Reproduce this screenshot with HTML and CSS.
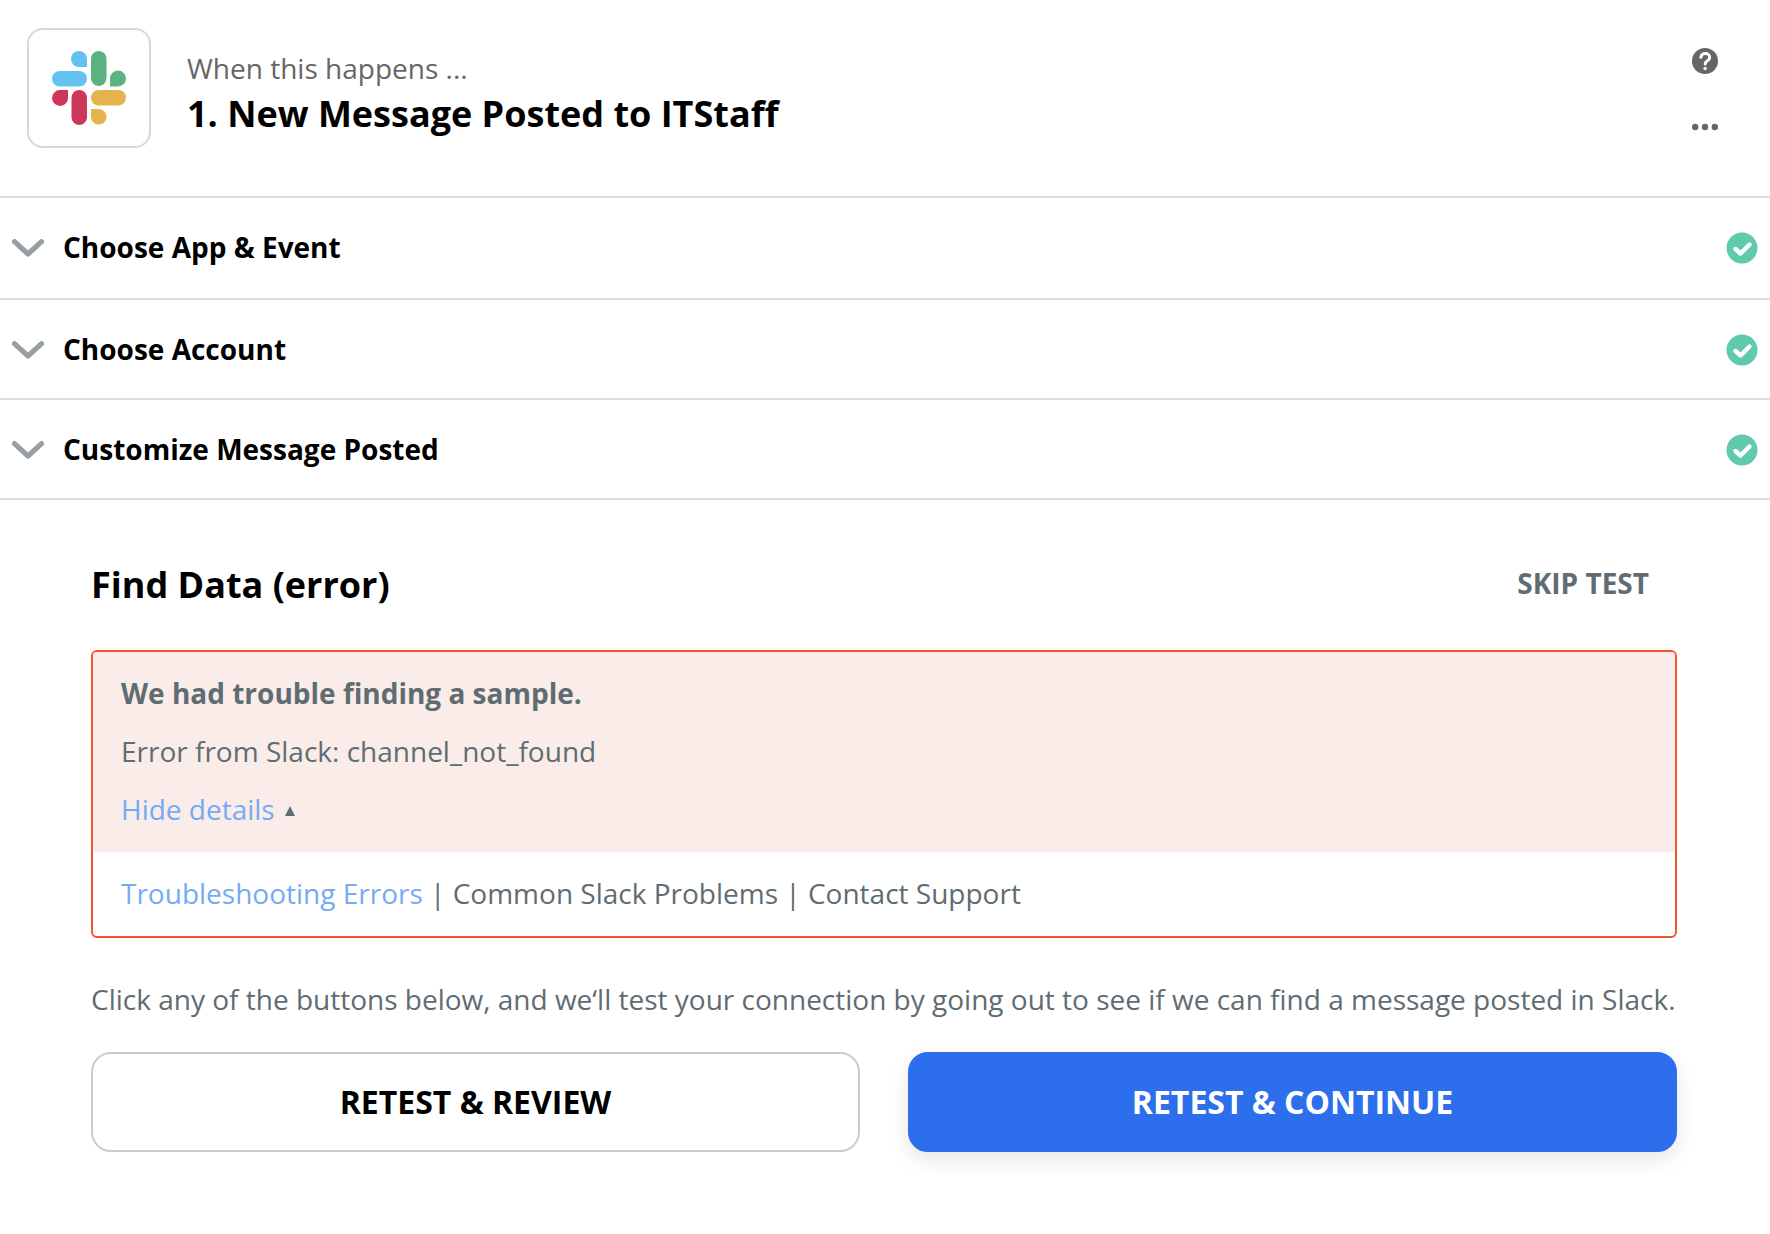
FILE: index.html
```html
<!DOCTYPE html>
<html lang="en">
<head>
<meta charset="utf-8">
<meta name="viewport" content="width=device-width, initial-scale=1">
<title>New Message Posted to ITStaff</title>
<link rel="stylesheet" href="styles.css">
</head>
<body>
<svg class="sprite" aria-hidden="true">
  <symbol id="chevron" viewBox="0 0 32 18"><path d="M2.500 2.700 16 15 29.500 2.700" fill="none" stroke="currentColor" stroke-width="5.200" stroke-linecap="round" stroke-linejoin="round"/></symbol>
  <symbol id="check" viewBox="0 0 32 32"><circle cx="16" cy="16" r="15.500" fill="currentColor"/><path d="M9.500 17 14.500 21.500 23.500 12.500" fill="none" stroke="#fff" stroke-width="4.400" stroke-linecap="round" stroke-linejoin="round"/></symbol>
</svg>
<main>
  <header class="step-header">
    <div class="app-tile">
      <svg class="app-logo" viewBox="0 0 74 74" role="img" aria-label="Slack">
        <g fill="#63c3ee"><path d="M35 16V8a8 8 0 1 0-8 8z"/><rect y="20" width="35" height="15.500" rx="7.750"/></g>
        <g fill="#5cb382"><rect x="39" width="15.500" height="35" rx="7.750"/><path d="M58 35.500V28a8 8 0 1 1 8 7.500z"/></g>
        <g fill="#cd375c"><path d="M16 39v7.500A8 8 0 1 1 8 39z"/><rect x="19.500" y="39" width="15.500" height="35" rx="7.750"/></g>
        <g fill="#e4b34c"><rect x="39" y="39" width="35" height="15.500" rx="7.750"/><path d="M39 58v8a7.800 7.800 0 1 0 8-8z"/></g>
      </svg>
    </div>
    <div class="step-text">
      <p class="step-kicker">When this happens ...</p>
      <h1 class="heading">1. New Message Posted to ITStaff</h1>
    </div>
    <div class="step-actions">
      <button class="icon-button" type="button" aria-label="Help">
        <svg viewBox="0 0 26 26"><circle cx="13" cy="13" r="13" fill="currentColor"/><path d="M8.900 9.300C9.400 6.700 11.200 5.600 13.300 5.600 15.900 5.600 17.700 7.200 17.700 9.400 17.700 12.700 13.200 12.600 13.200 16" fill="none" stroke="#fff" stroke-width="3" stroke-linecap="round"/><circle cx="13.100" cy="20.500" r="1.700" fill="#fff"/></svg>
      </button>
      <button class="icon-button" type="button" aria-label="More options">
        <svg viewBox="0 0 26 26" fill="currentColor"><circle cx="3.200" cy="13" r="3.200"/><circle cx="13" cy="13" r="3.200"/><circle cx="22.800" cy="13" r="3.200"/></svg>
      </button>
    </div>
  </header>

  <button class="section-row section-row-first" type="button">
    <svg class="chevron"><use href="#chevron"/></svg>
    <span class="section-title">Choose App &amp; Event</span>
    <svg class="check"><use href="#check"/></svg>
  </button>
  <button class="section-row" type="button">
    <svg class="chevron"><use href="#chevron"/></svg>
    <span class="section-title">Choose Account</span>
    <svg class="check"><use href="#check"/></svg>
  </button>
  <button class="section-row" type="button">
    <svg class="chevron"><use href="#chevron"/></svg>
    <span class="section-title">Customize Message Posted</span>
    <svg class="check"><use href="#check"/></svg>
  </button>

  <section class="test-panel">
    <div class="test-head">
      <h2 class="heading">Find Data (error)</h2>
      <button class="skip-button" type="button">SKIP TEST</button>
    </div>
    <div class="alert" role="alert">
      <div class="alert-message">
        <p><strong>We had trouble finding a sample.</strong></p>
        <p>Error from Slack: channel_not_found</p>
        <p class="details"><a class="link" href="#details">Hide details</a><svg class="caret" viewBox="0 0 10 10"><path d="M5 0 10 10H0z" fill="currentColor"/></svg></p>
      </div>
      <p class="alert-links" id="details"><a class="link" href="#errors">Troubleshooting Errors</a> | <a class="plain-link" href="#problems">Common Slack Problems</a> | <a class="plain-link" href="#support">Contact Support</a></p>
    </div>
    <p class="hint">Click any of the buttons below, and we‘ll test your connection by going out to see if we can find a message posted in Slack.</p>
    <div class="button-row">
      <button class="button button-outline" type="button">RETEST &amp; REVIEW</button>
      <button class="button button-primary" type="button">RETEST &amp; CONTINUE</button>
    </div>
  </section>
</main>
</body>
</html>
```
FILE: styles.css
```css
* {
  box-sizing: border-box;
}

body {
  margin: 0;
  background: #fff;
  color: #5f6c72;
  font: 28px/42px "Open Sans", "Noto Sans", sans-serif;
}

h1, h2, p {
  margin: 0;
}

button {
  margin: 0;
  border: 0;
  background: none;
  color: inherit;
  font: inherit;
  cursor: pointer;
}

.sprite {
  display: none;
}

.heading {
  color: #000;
  font-size: 36px;
  line-height: 48px;
  font-weight: 700;
}

.step-header {
  display: flex;
  align-items: flex-start;
  gap: 36px;
  padding: 28px 52px 48px 27px;
  border-bottom: 2px solid #dadfe3;
}

.app-tile {
  display: flex;
  align-items: center;
  justify-content: center;
  flex: none;
  width: 124px;
  height: 120px;
  border: 2px solid #d8d8d8;
  border-radius: 16px;
}

.app-logo {
  width: 74px;
  height: 74px;
}

.step-text {
  display: flex;
  flex: 1;
  flex-direction: column;
  gap: 2px;
  padding-top: 20px;
}

.step-kicker {
  color: #666;
  line-height: 40px;
}

.step-actions {
  display: flex;
  flex-direction: column;
  gap: 40px;
  padding-top: 20px;
}

.icon-button {
  display: block;
  width: 26px;
  height: 26px;
  padding: 0;
  color: #666;
}

.icon-button svg {
  display: block;
  width: 100%;
  height: 100%;
}

.section-row {
  display: flex;
  align-items: center;
  gap: 19px;
  width: 100%;
  padding: 29px 12px 27px;
  border-bottom: 2px solid #dadfe3;
  color: #000;
  font-weight: 700;
  text-align: left;
}

.section-row-first {
  padding-bottom: 29px;
}

.section-title {
  flex: 1;
  padding-bottom: 2px;
  line-height: 40px;
}

.chevron {
  width: 32px;
  height: 18px;
  color: #969fa3;
}

.check {
  width: 32px;
  height: 32px;
  color: #5fcbac;
}

.test-panel {
  padding: 61px 93px 82px 91px;
}

.test-head {
  display: flex;
  align-items: center;
  justify-content: space-between;
  margin-bottom: 41px;
}

.skip-button {
  padding: 0 28px 4px;
  font-weight: 700;
  line-height: 40px;
}

.alert {
  overflow: hidden;
  border: 2px solid #ee562f;
  border-radius: 6px;
}

.alert-message {
  display: flex;
  flex-direction: column;
  gap: 16px;
  padding: 20px 28px 22px;
  background: #faece9;
}

.details {
  display: flex;
  align-items: center;
  gap: 10px;
}

.caret {
  width: 10px;
  height: 10px;
  margin-top: 4px;
}

.alert-links {
  padding: 20px 28px 22px;
}

.link {
  color: #74abf2;
  text-decoration: none;
}

.plain-link {
  color: inherit;
  text-decoration: none;
}

.hint {
  margin: 40px 0 32px;
}

.button-row {
  display: grid;
  grid-template-columns: 1fr 1fr;
  gap: 48px;
}

.button {
  padding: 27px 24px;
  border: 2px solid transparent;
  border-radius: 20px;
  font-size: 32px;
  font-weight: 700;
}

.button-outline {
  border-color: #ccc;
  color: #000;
}

.button-primary {
  border-color: #2d6eed;
  background: #2d6eed;
  color: #fff;
  box-shadow: 0 8px 20px rgba(0, 0, 0, 0.1);
}
```
